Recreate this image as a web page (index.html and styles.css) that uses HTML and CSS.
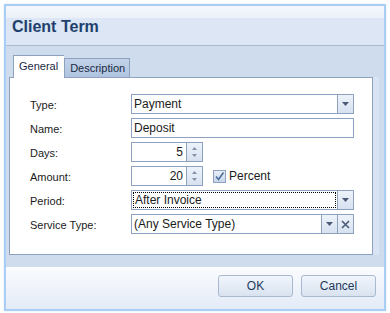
FILE: index.html
```html
<!DOCTYPE html>
<html lang="en">
<head>
  <meta charset="UTF-8" />
  <title>Client Term</title>
  <link rel="stylesheet" href="styles.css">
</head>
<body>

  <div class="window">
    <div class="titlebar">
      <h1>Client Term</h1>
    </div>

    <div class="content">
      <div class="tabs">
        <div class="tab active">General</div>
        <div class="tab">Description</div>
      </div>

      <div class="panel">
        <div class="row">
          <label>Type:</label>
          <div class="field wide">
            <span class="value">Payment</span>
            <span class="btn"><svg width="7" height="4" viewBox="0 0 7 4"><path d="M0 0h7L3.5 4z" fill="#4b5b76"/></svg></span>
          </div>
        </div>

        <div class="row">
          <label>Name:</label>
          <div class="field wide">
            <span class="value">Deposit</span>
          </div>
        </div>

        <div class="row">
          <label>Days:</label>
          <div class="field spin">
            <span class="value num">5</span>
            <span class="btn spin-btn">
              <svg width="5" height="3" viewBox="0 0 5 3"><path d="M0 3h5L2.5 0z" fill="#8592a8"/></svg>
              <svg width="5" height="3" viewBox="0 0 5 3"><path d="M0 0h5L2.5 3z" fill="#8592a8"/></svg>
            </span>
          </div>
        </div>

        <div class="row">
          <label>Amount:</label>
          <div class="field spin">
            <span class="value num">20</span>
            <span class="btn spin-btn">
              <svg width="5" height="3" viewBox="0 0 5 3"><path d="M0 3h5L2.5 0z" fill="#8592a8"/></svg>
              <svg width="5" height="3" viewBox="0 0 5 3"><path d="M0 0h5L2.5 3z" fill="#8592a8"/></svg>
            </span>
          </div>
          <div class="check">
            <span class="box"><svg width="11" height="11" viewBox="0 0 11 11"><path d="M2 5.5l2.5 3L9.5 1.5" stroke="#4d6c9e" stroke-width="1.6" fill="none"/></svg></span>
            <span>Percent</span>
          </div>
        </div>

        <div class="row">
          <label>Period:</label>
          <div class="field wide">
            <span class="value focus">After Invoice</span>
            <span class="btn"><svg width="7" height="4" viewBox="0 0 7 4"><path d="M0 0h7L3.5 4z" fill="#4b5b76"/></svg></span>
          </div>
        </div>

        <div class="row">
          <label>Service Type:</label>
          <div class="field wide">
            <span class="value">(Any Service Type)</span>
            <span class="btn"><svg width="7" height="4" viewBox="0 0 7 4"><path d="M0 0h7L3.5 4z" fill="#4b5b76"/></svg></span>
            <span class="btn"><svg width="9" height="9" viewBox="0 0 9 9"><path d="M1 1l7 7M8 1L1 8" stroke="#4b5b76" stroke-width="1.6"/></svg></span>
          </div>
        </div>
      </div>
    </div>

    <div class="footer">
      <button>OK</button>
      <button>Cancel</button>
    </div>
  </div>

</body>
</html>
```

FILE: styles.css
```css
body {
  margin: 0;
  background: #fff;
  font-family: "Liberation Sans", Arial, sans-serif;
  font-size: 11px;
  color: #1b1b1b;
}
.window {
  margin: 4px;
  width: 378px;
  height: 303px;
  border: 2px solid #a9cdf4;
  box-shadow: 0 0 2px #d2e6fb;
  display: flex;
  flex-direction: column;
}
.titlebar {
  height: 39px;
  background: linear-gradient(#f4f7fc 0, #ebf1f9 12px, #dce6f4 12px, #dce6f4 100%);
  border-bottom: 1px solid #a8bbd5;
}
h1 {
  margin: 0;
  padding: 12px 0 0 6px;
  font-size: 16px;
  line-height: 18px;
  color: #203f6d;
}
.content {
  height: 212px;
  background: #cfdcee;
  padding: 9px 0 0 3px;
}
.tabs {
  display: flex;
  align-items: flex-end;
  height: 22px;
  padding-left: 4px;
}
.tab {
  height: 18px;
  line-height: 18px;
  padding: 0 4px 0 5px;
  border: 1px solid #8ea2bf;
  border-bottom: none;
  background: linear-gradient(#c1d2e9, #b0c4df);
  color: #1a2a44;
}
.tab.active {
  height: 22px;
  line-height: 20px;
  margin-bottom: -1px;
  position: relative;
  padding: 0 6px 0 5px;
  background: #fff;
  border-right: none;
  color: #1b2a44;
}
.panel {
  width: 362px;
  height: 160px;
  background: #fff;
  border: 1px solid #8ea2bf;
  padding: 16px 0 0 0;
  box-shadow: 6px 0 0 #d8e4f3;
}
.row {
  display: flex;
  align-items: center;
  height: 20px;
  margin-bottom: 4px;
  padding-left: 20px;
}
label {
  width: 101px;
  padding-top: 2px;
}
.field {
  display: flex;
  height: 18px;
  border: 1px solid #8ea2bf;
  background: #fff;
}
.field.wide {
  width: 221px;
}
.field.spin {
  width: 70px;
}
.value {
  flex: 1;
  padding-left: 2px;
  line-height: 18px;
  font-size: 12px;
  white-space: nowrap;
  overflow: hidden;
}
.value.num {
  text-align: right;
  padding-right: 3px;
}
.value.focus {
  margin: 1px;
  padding-left: 1px;
  line-height: 14px;
  border: 1px dotted #000;
}
.btn {
  width: 15px;
  border-left: 1px solid #8ea2bf;
  background: linear-gradient(#eef3fa, #d6e1f0);
  display: flex;
  align-items: center;
  justify-content: center;
}
.spin-btn {
  flex-direction: column;
  gap: 4px;
}
.check {
  display: flex;
  align-items: center;
  margin-left: 10px;
  gap: 3px;
  font-size: 12px;
}
.box {
  width: 11px;
  height: 11px;
  border: 1px solid #8ea2bf;
  background: linear-gradient(#e6edf7, #c9d7ea);
  display: flex;
}
.footer {
  flex: 1;
  display: flex;
  justify-content: flex-end;
  align-items: flex-start;
  gap: 8px;
  padding: 8px 8px 0 0;
  background: linear-gradient(#fbfcfe, #e3ebf7);
}
button {
  width: 75px;
  height: 22px;
  border: 1px solid #a9b9cf;
  border-radius: 3px;
  background: linear-gradient(#f1f5fb, #d9e3f0);
  font-family: "Liberation Sans", Arial, sans-serif;
  font-size: 12px;
  color: #1e3a5c;
}
```
